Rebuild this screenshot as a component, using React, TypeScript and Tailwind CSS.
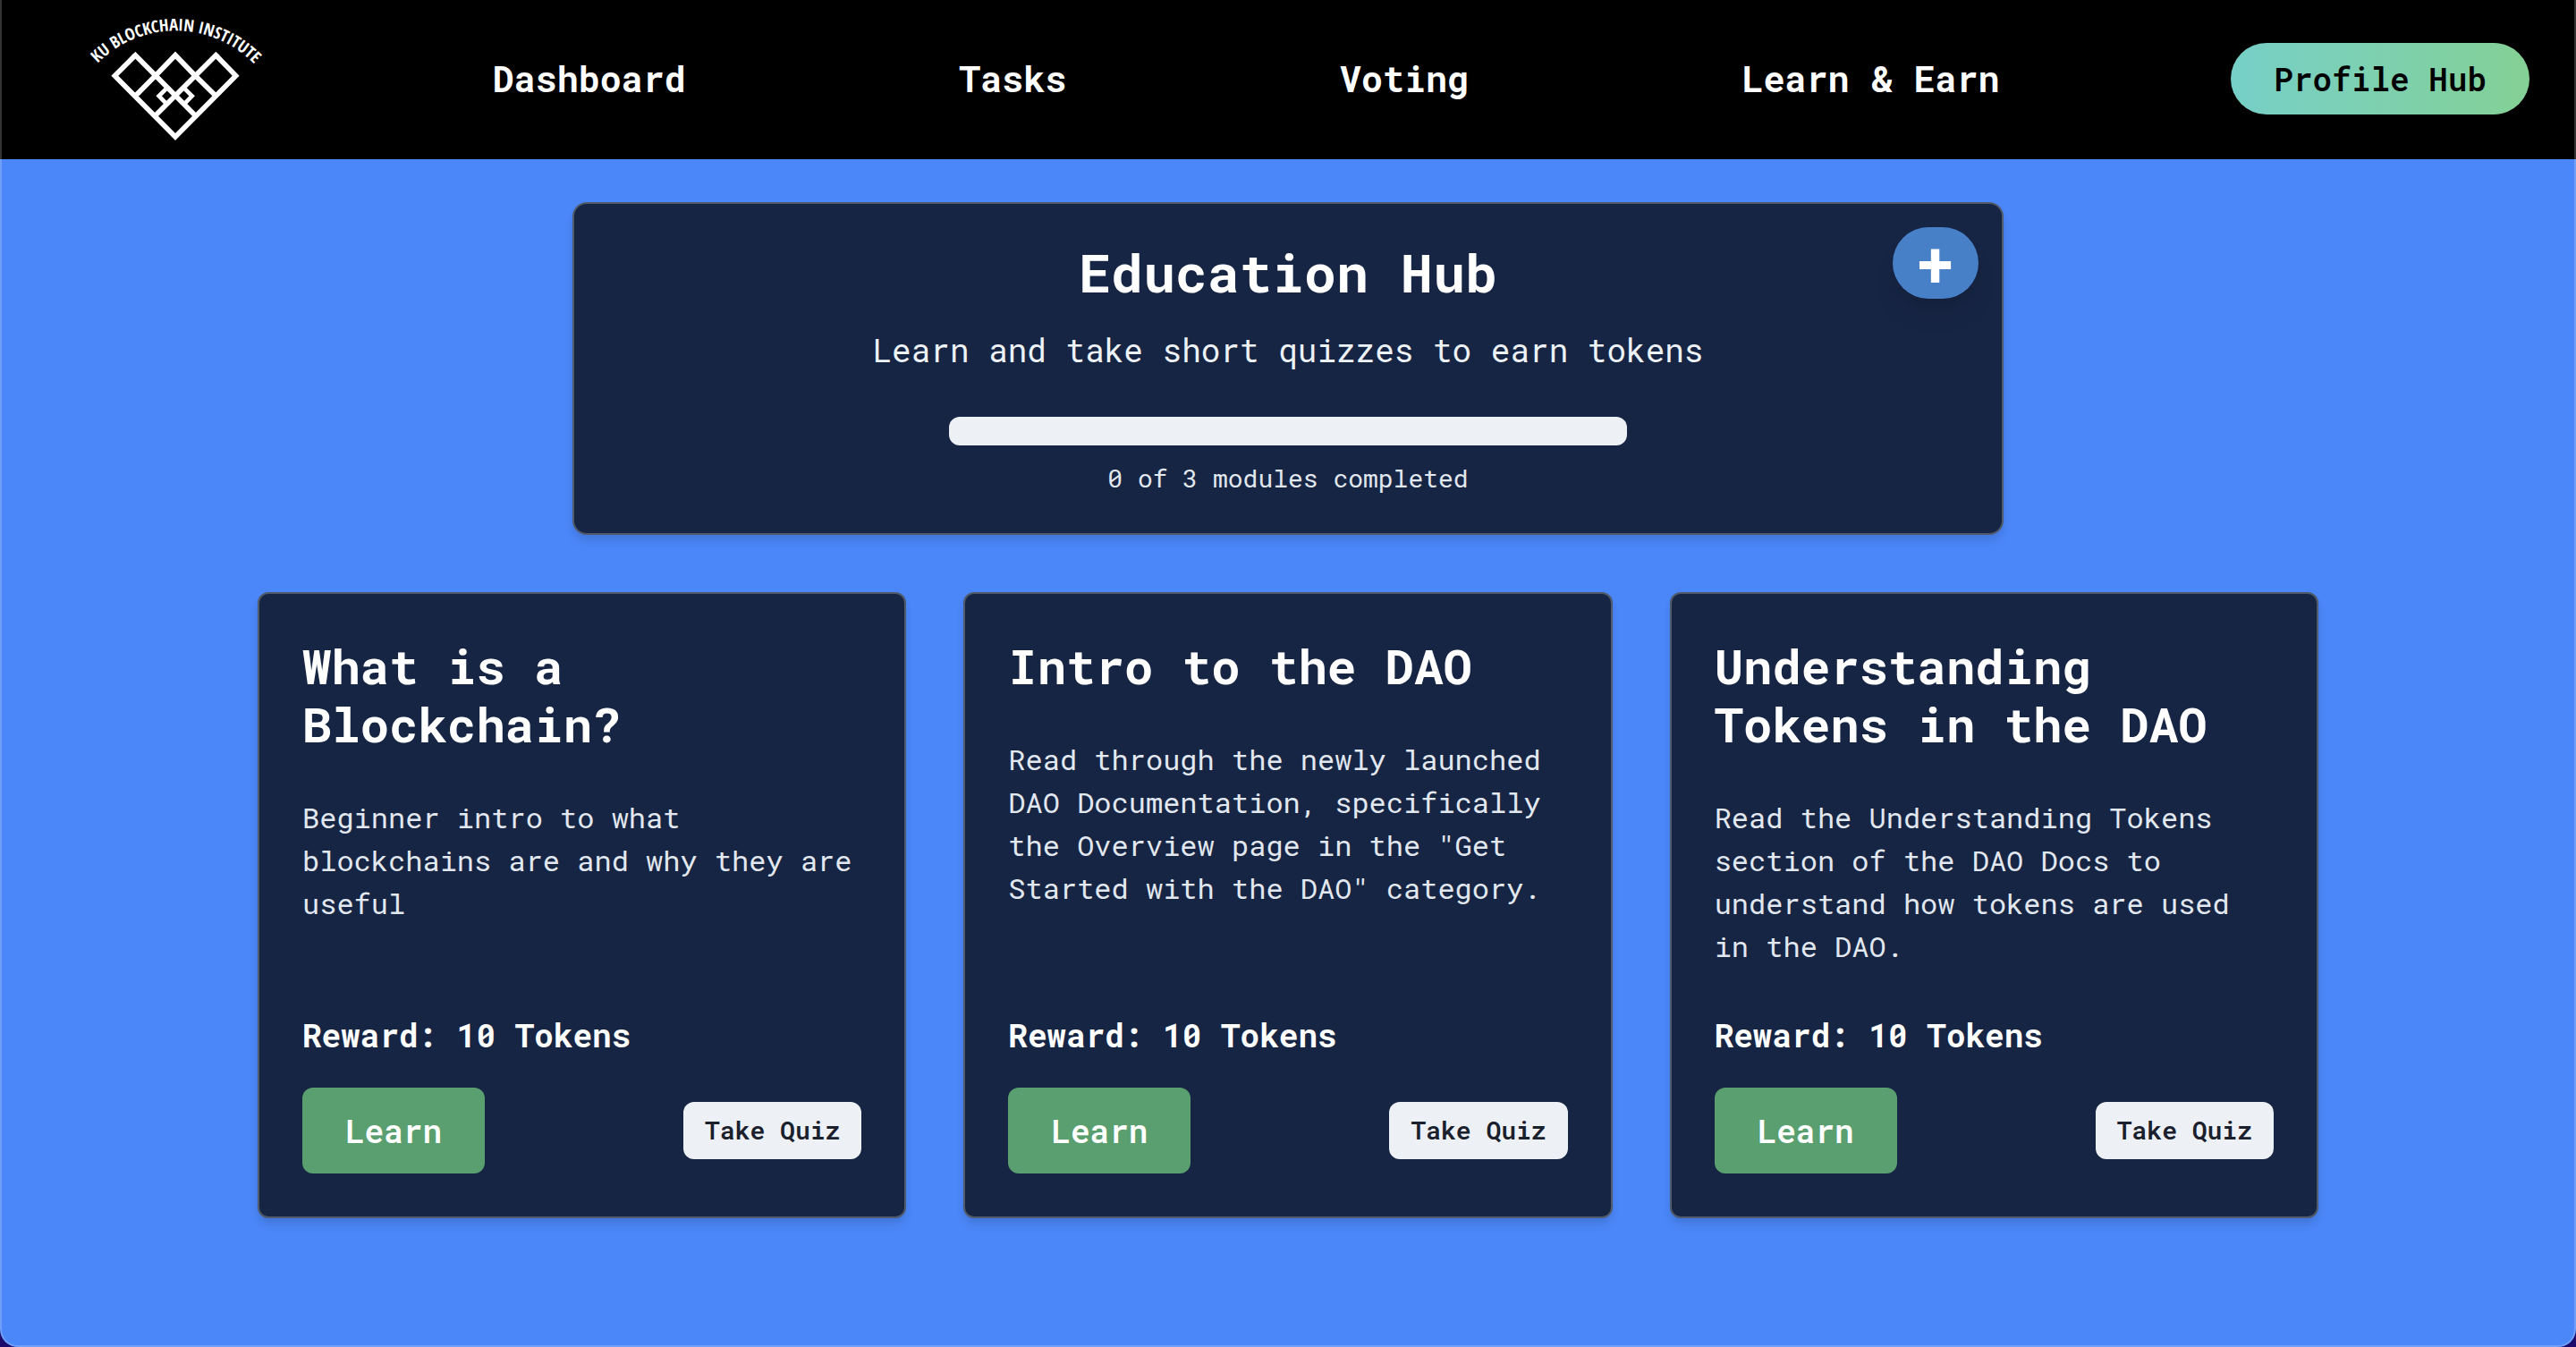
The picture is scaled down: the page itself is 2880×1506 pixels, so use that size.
import React from "react";

type Module = { title: string; description: string; reward: number };

const modules: Module[] = [
  {
    title: "What is a Blockchain?",
    description: "Beginner intro to what blockchains are and why they are useful",
    reward: 10,
  },
  {
    title: "Intro to the DAO",
    description:
      'Read through the newly launched DAO Documentation, specifically the Overview page in the "Get Started with the DAO" category.',
    reward: 10,
  },
  {
    title: "Understanding Tokens in the DAO",
    description:
      "Read the Understanding Tokens section of the DAO Docs to understand how tokens are used in the DAO.",
    reward: 10,
  },
];

const links = ["Dashboard", "Tasks", "Voting", "Learn & Earn"];

function Logo() {
  return (
    <svg
      viewBox="30 15 639 495"
      className="h-[165px] w-[213px] overflow-visible"
      role="img"
      aria-label="KU Blockchain Institute"
    >
      <path id="logo-arc" d="M 88 209 A 367 367 0 0 1 612 211" fill="none" />
      <text
        fill="#fff"
        fontSize="56"
        fontWeight="700"
        fontFamily="'Open Sans Condensed', 'Roboto Condensed', 'Liberation Sans Narrow', 'Liberation Sans', sans-serif"
      >
        <textPath href="#logo-arc" startOffset="50%" textAnchor="middle">
          KU BLOCKCHAIN INSTITUTE
        </textPath>
      </text>
      <g fill="none" stroke="#fff" strokeLinejoin="miter">
        <path strokeWidth="17" d="M214 182 L145 251 L348 456 L551 251 L484 182" />
        <path strokeWidth="17" d="M281 251 L348 182 L415 251" />
        <path strokeWidth="17" d="M208 176 L418 388 M490 176 L278 388 M286 246 L214 319 M410 246 L484 319" />
        <path strokeWidth="14" d="M320 292 L293 319 L320 347 M377 292 L404 319 L377 347" />
      </g>
    </svg>
  );
}

function Header() {
  return (
    <header className="flex h-[178px] items-center bg-black pr-[52px] pb-0.5 text-white">
      <a href="#home" className="w-[398px] shrink-0 pl-[90px]">
        <Logo />
      </a>
      <nav className="mr-[106px] flex flex-1 justify-around">
        {links.map((l) => (
          <a key={l} href="#nav" className="text-[40px] leading-[60px] font-bold whitespace-nowrap">
            {l}
          </a>
        ))}
      </nav>
      <button className="h-20 rounded-full bg-linear-to-r from-[#76cfc7] to-[#84d095] px-12 text-[36px] font-semibold whitespace-nowrap text-black">
        Profile Hub
      </button>
    </header>
  );
}

function ModuleCard({ title, description, reward }: Module) {
  return (
    <article className="flex flex-col rounded-xl border-2 border-[#505a6b] bg-[#172544] p-12 shadow-[0_8px_12px_-2px_rgba(0,0,0,0.1),0_4px_8px_-2px_rgba(0,0,0,0.06)]">
      <h2 className="text-[54px] leading-[65px] font-bold text-white">{title}</h2>
      <p className="mt-12 mb-12 text-[32px] leading-[48px] text-[#e2e8f0]">{description}</p>
      <p className="mt-auto text-[36px] leading-[54px] font-bold text-white">Reward: {reward} Tokens</p>
      <div className="mt-8 flex items-center justify-between">
        <button className="h-24 rounded-xl bg-[#5a9f6f] px-12 text-[36px] font-semibold text-white">Learn</button>
        <button className="h-16 rounded-xl bg-[#edf1f6] px-6 text-[28px] font-semibold text-[#1a202c]">Take Quiz</button>
      </div>
    </article>
  );
}

export default function App() {
  return (
    <div className="bg-[#1d0a6b] font-['Roboto_Mono','DejaVu_Sans_Mono',monospace]">
      <div className="relative flex min-h-screen flex-col overflow-hidden rounded-b-[20px] bg-[#4b87f8]">
        <Header />
        <main className="flex flex-col items-center gap-16 pt-12 pb-16">
          <section className="relative flex w-[1600px] max-w-full flex-col items-center rounded-2xl border-2 border-[#505a6b] bg-[#172544] p-10 text-center shadow-[0_8px_12px_-2px_rgba(0,0,0,0.1),0_4px_8px_-2px_rgba(0,0,0,0.06)]">
            <h1 className="text-[60px] leading-[72px] font-bold text-white">Education Hub</h1>
            <p className="mt-6 text-[36px] leading-[54px] text-[#edf2f7]">Learn and take short quizzes to earn tokens</p>
            <div
              role="progressbar"
              aria-label="Modules completed"
              aria-valuemin={0}
              aria-valuemax={3}
              aria-valuenow={0}
              className="mt-12 h-8 w-1/2 rounded-xl bg-[#edf1f6]"
            />
            <p className="mt-4 text-[28px] leading-[42px] text-[#e2e8f0]">0 of 3 modules completed</p>
            <button
              aria-label="Add module"
              className="absolute top-[26px] right-[26px] flex h-20 w-24 items-center justify-center rounded-full bg-[#4880c8] text-[72px] leading-none font-bold text-white shadow-[0_20px_30px_-6px_rgba(0,0,0,0.1),0_8px_12px_-4px_rgba(0,0,0,0.05)]"
            >
              +
            </button>
          </section>
          <section className="grid w-4/5 grid-cols-3 gap-16">
            {modules.map((m) => (
              <ModuleCard key={m.title} {...m} />
            ))}
          </section>
        </main>
        <div className="pointer-events-none absolute inset-0 rounded-b-[20px] border-x-2 border-b-2 border-white/20" />
      </div>
    </div>
  );
}
